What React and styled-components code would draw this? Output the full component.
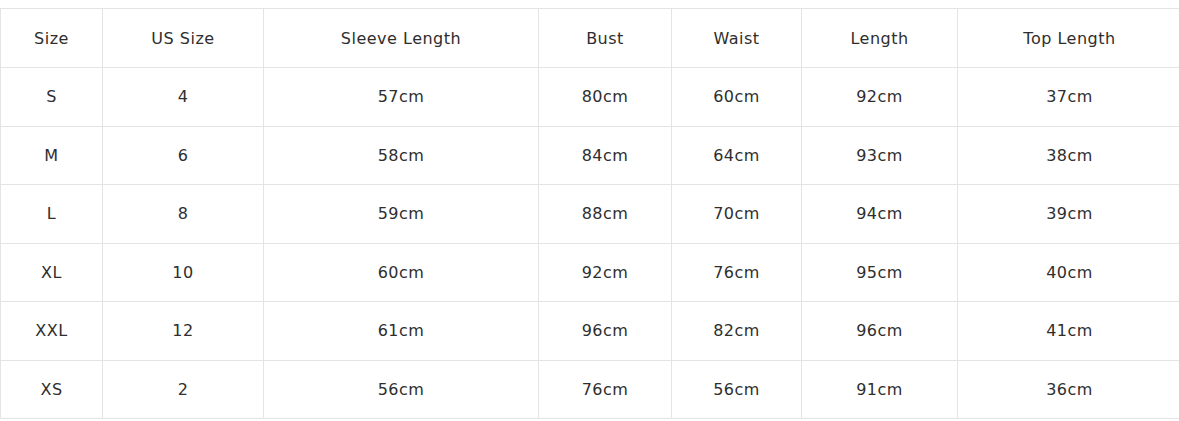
import styled, { createGlobalStyle } from "styled-components";

const GlobalStyle = createGlobalStyle`
  body {
    margin: 0;
    background: #ffffff;
    font-family: "DejaVu Sans", "Liberation Sans", sans-serif;
  }
`;

const Page = styled.div`
  padding-top: 8px;
  overflow: hidden;
`;

const Table = styled.table`
  width: 1182px;
  border-collapse: collapse;
  table-layout: fixed;
  color: #2e2e2e;
  font-size: 16px;
  letter-spacing: 0.5px;
`;

const HeadCell = styled.th`
  width: ${(p) => (p.$w ? `${p.$w}px` : "auto")};
  height: 58px;
  padding: 0;
  border: 1px solid #e4e4e4;
  font-weight: 400;
  text-align: center;
  vertical-align: middle;
`;

const Cell = styled.td`
  height: 57.5px;
  padding: 0;
  border: 1px solid #e4e4e4;
  text-align: center;
  vertical-align: middle;
`;

const columns = [
  { label: "Size", width: 101 },
  { label: "US Size", width: 160 },
  { label: "Sleeve Length", width: 274 },
  { label: "Bust", width: 132 },
  { label: "Waist", width: 129 },
  { label: "Length", width: 155 },
  { label: "Top Length" },
];

const rows = [
  ["S", "4", "57cm", "80cm", "60cm", "92cm", "37cm"],
  ["M", "6", "58cm", "84cm", "64cm", "93cm", "38cm"],
  ["L", "8", "59cm", "88cm", "70cm", "94cm", "39cm"],
  ["XL", "10", "60cm", "92cm", "76cm", "95cm", "40cm"],
  ["XXL", "12", "61cm", "96cm", "82cm", "96cm", "41cm"],
  ["XS", "2", "56cm", "76cm", "56cm", "91cm", "36cm"],
];

function App() {
  return (
    <Page>
      <GlobalStyle />
      <Table>
        <thead>
          <tr>
            {columns.map((col) => (
              <HeadCell key={col.label} $w={col.width}>
                {col.label}
              </HeadCell>
            ))}
          </tr>
        </thead>
        <tbody>
          {rows.map((row) => (
            <tr key={row[0]}>
              {row.map((value, i) => (
                <Cell key={i}>{value}</Cell>
              ))}
            </tr>
          ))}
        </tbody>
      </Table>
    </Page>
  );
}

export default App;
